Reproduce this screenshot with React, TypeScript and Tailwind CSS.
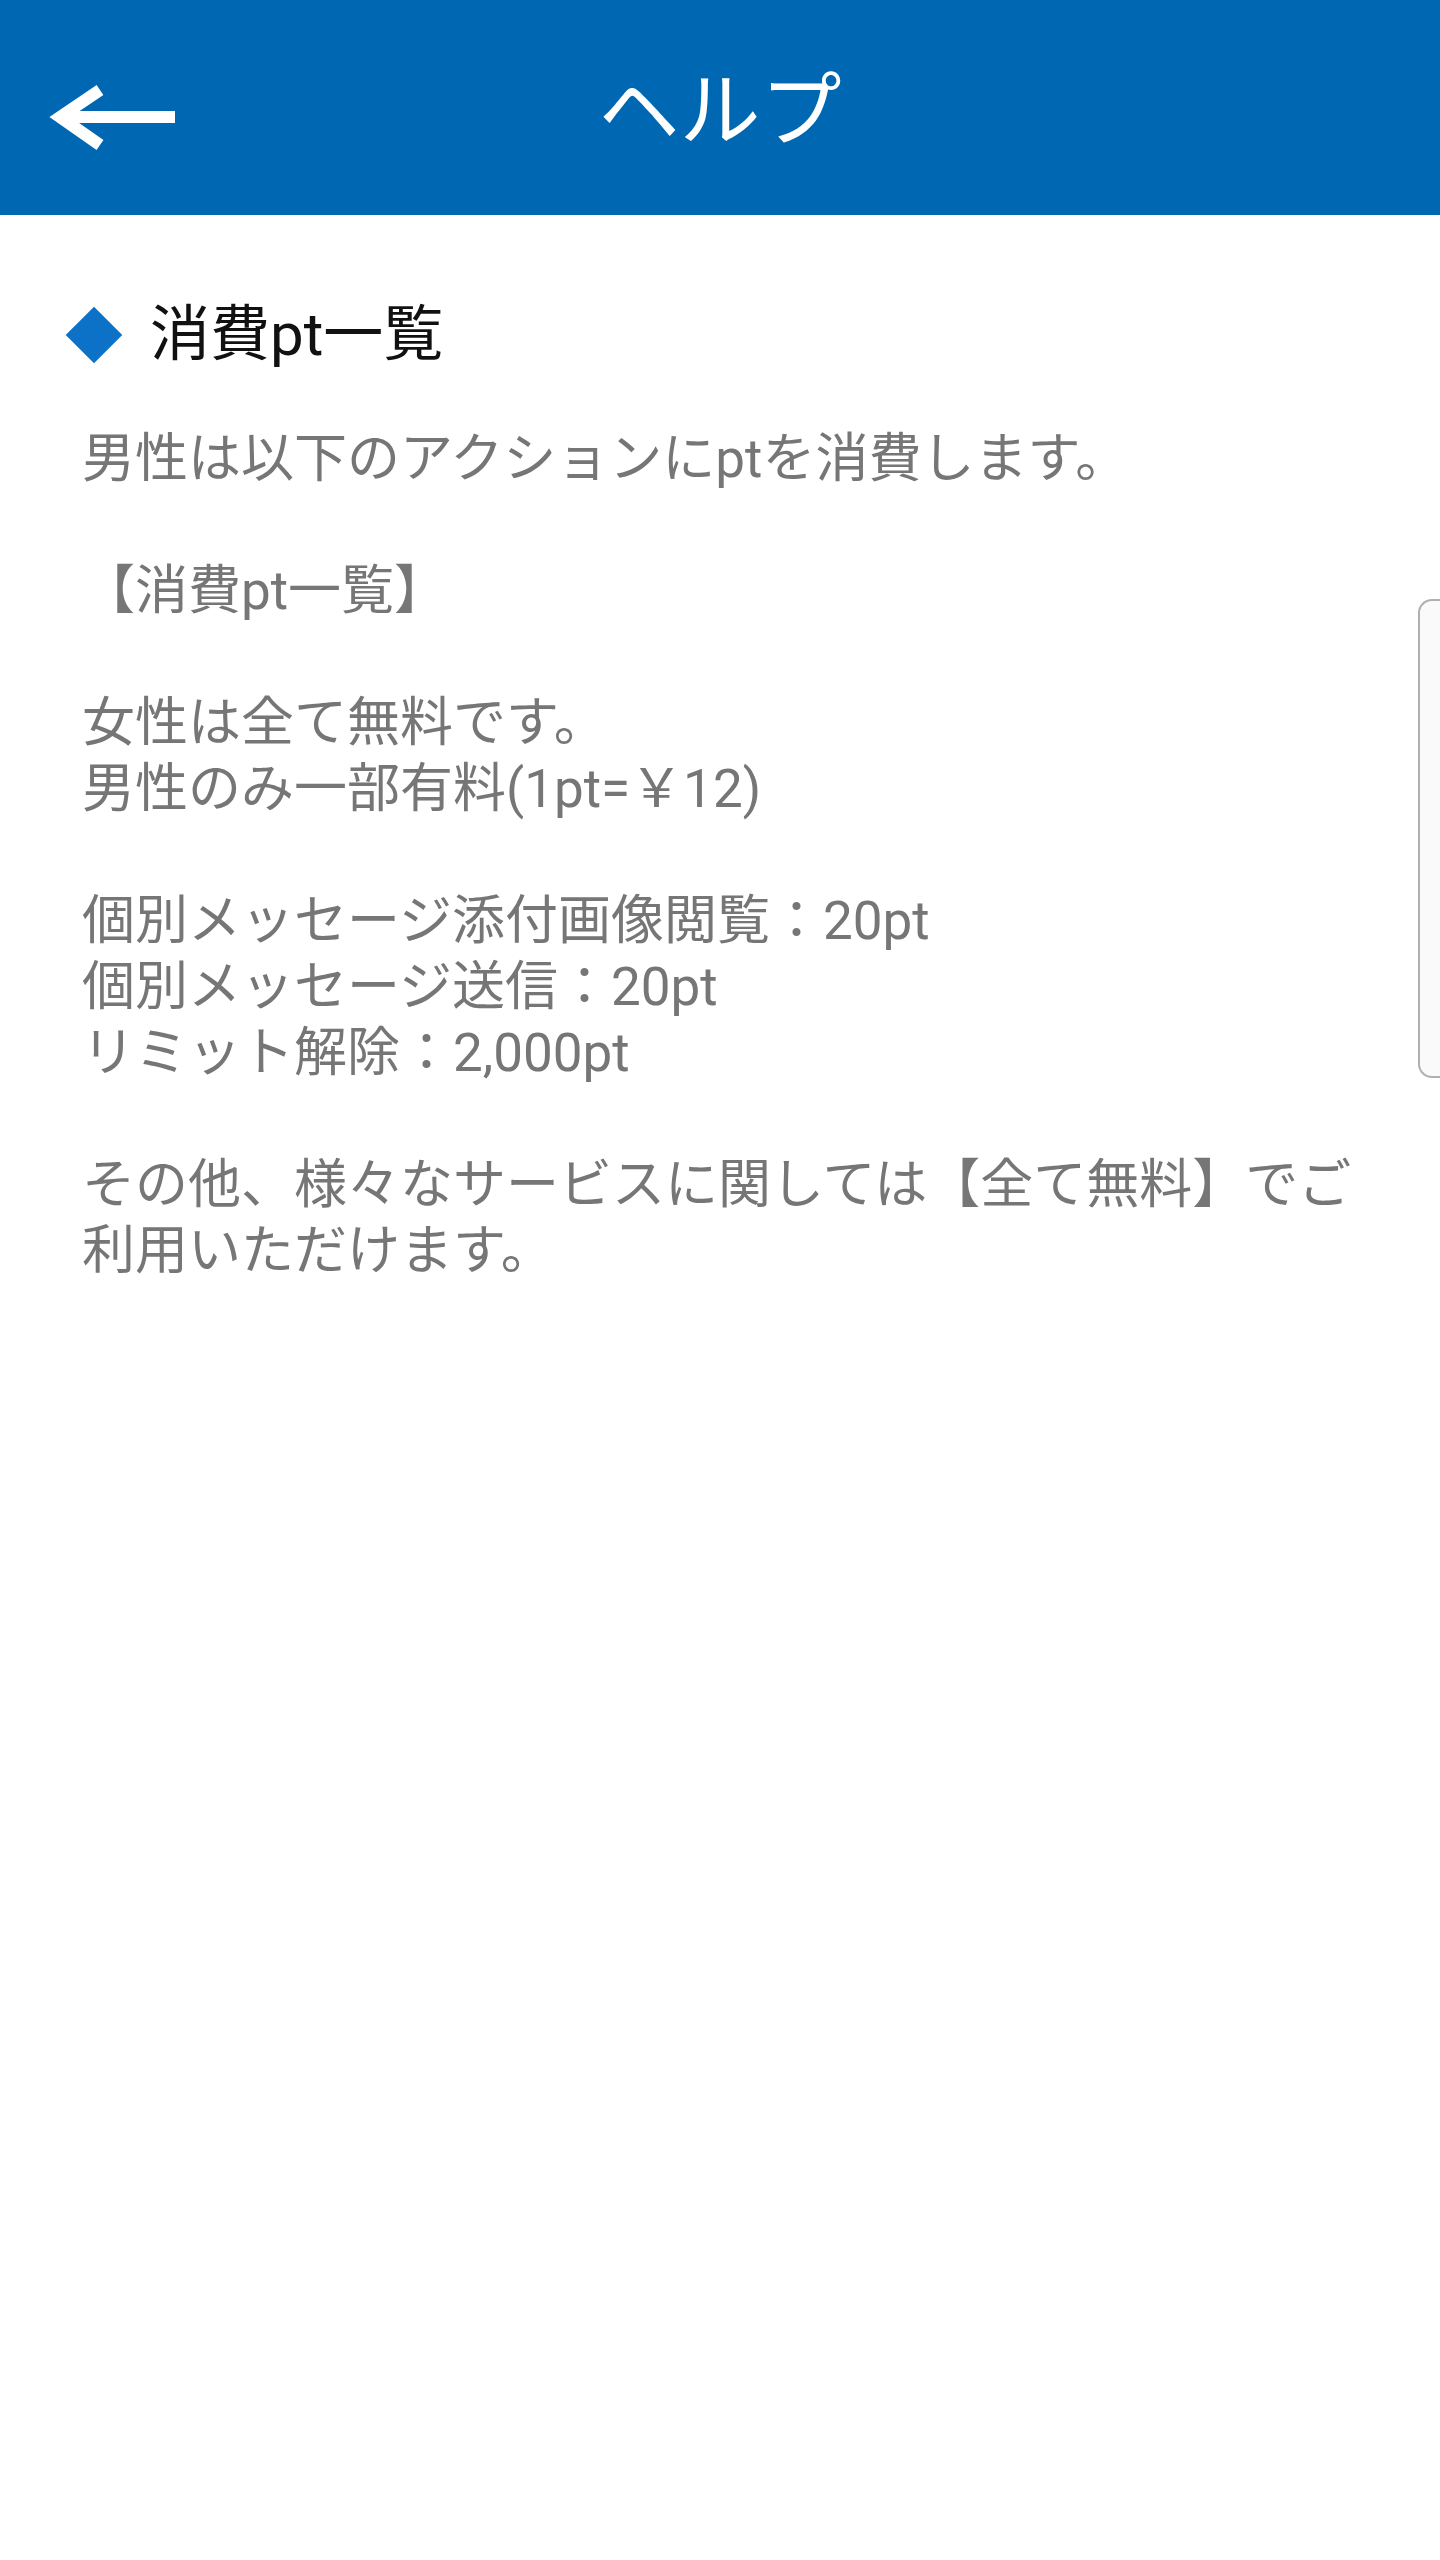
import React from 'react'

const lines = [
  '男性は以下のアクションにptを消費します。',
  '',
  '【消費pt一覧】',
  '',
  '女性は全て無料です。',
  '男性のみ一部有料(1pt=￥12)',
  '',
  '個別メッセージ添付画像閲覧：20pt',
  '個別メッセージ送信：20pt',
  'リミット解除：2,000pt',
  '',
  'その他、様々なサービスに関しては【全て無料】でご',
  '利用いただけます。',
]

const BackArrow = () => (
  <svg width="140" height="70" viewBox="0 0 140 70" fill="none">
    <path d="M20 35 H135" stroke="white" strokeWidth="12" />
    <path d="M60 8 L20 35 L60 63" stroke="white" strokeWidth="12" strokeLinejoin="miter" />
  </svg>
)

const App = () => {
  return (
    <div className="relative min-h-[2560px] w-[1440px] bg-white font-['Roboto','Noto_Sans_CJK_JP',sans-serif]">
      <header className="relative flex h-[215px] items-center justify-center bg-[#0068b3]">
        <button className="absolute left-[40px] top-[82px]">
          <BackArrow />
        </button>
        <h1 className="pt-[8px] text-[81px] leading-none text-white">ヘルプ</h1>
      </header>

      <main className="pl-[66px] pr-[58px] pt-[80px]">
        <div className="flex h-[80px] items-center gap-[28px]">
          <div className="flex h-[56px] w-[56px] items-center justify-center">
            <div className="h-[40px] w-[40px] rotate-45 bg-[#0b72c7]" />
          </div>
          <h2 className="text-[60px] leading-none text-[#111]">消費pt一覧</h2>
        </div>

        <div className="ml-[16px] mt-[51px] text-[53px] leading-[66px] text-[#767676]">
          {lines.map((line, i) => (
            <div key={i} className="h-[66px] whitespace-nowrap">
              {line}
            </div>
          ))}
        </div>
      </main>

      {/* edge panel handle */}
      <div className="absolute right-0 top-[599px] h-[479px] w-[22px] rounded-l-[14px] border-y-2 border-l-2 border-[#b0b0b0] bg-[#fafafa]" />
    </div>
  )
}

export default App
